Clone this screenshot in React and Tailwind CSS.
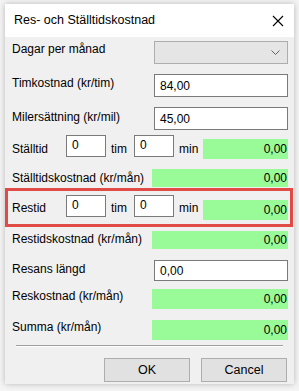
import React from "react";

const font = { fontFamily: '"Liberation Sans", "Noto Sans", sans-serif' };

const Green = ({ className = "" }) => (
  <div className={`bg-[#98fb98] text-right pr-[1px] leading-[18px] ${className}`}>0,00</div>
);

const Box = ({ value, className = "" }) => (
  <div className={`bg-white border border-[#7a7a7a] px-[5px] leading-[18px] ${className}`}>{value}</div>
);

export default function App() {
  return (
    <div className="w-[299px] h-[391px] bg-[#f4f4f4] pt-[4px] pl-[5px] whitespace-nowrap" style={font}>
      <div className="w-[289px] h-[380px] bg-[#f0f0f0] shadow-[0_0_6px_rgba(0,0,0,0.25)] text-[12px] text-black flex flex-col">
        {/* title bar */}
        <div className="h-[33px] bg-white flex items-center justify-between pl-[9px] pr-[10px] shrink-0">
          <span className="text-[12.5px]">Res- och Ställtidskostnad</span>
          <svg width="12" height="12" viewBox="0 0 12 12">
            <path d="M1 1 L11 11 M11 1 L1 11" stroke="#000" strokeWidth="1.1" />
          </svg>
        </div>

        <div className="pl-[7px] pr-[6px] flex flex-col">
          {/* Dagar per månad */}
          <div className="h-[33px] flex justify-between items-start">
            <span className="mt-[3px]">Dagar per månad</span>
            <div className="mt-[4px] w-[134px] h-[23px] bg-[#e5e5e5] border border-[#adadad] flex items-center justify-end pr-[7px]">
              <svg width="9" height="6" viewBox="0 0 9 6">
                <path d="M0.5 0.5 L4.5 4.5 L8.5 0.5" stroke="#606060" fill="none" />
              </svg>
            </div>
          </div>

          {/* Timkostnad */}
          <div className="h-[33px] flex justify-between items-start">
            <span className="mt-[4px]">Timkostnad (kr/tim)</span>
            <Box value="84,00" className="mt-[4px] w-[134px] h-[23px] leading-[22px]" />
          </div>

          {/* Milersättning */}
          <div className="h-[30px] flex justify-between items-start">
            <span className="mt-[5px]">Milersättning (kr/mil)</span>
            <Box value="45,00" className="mt-[4px] w-[134px] h-[23px] leading-[22px]" />
          </div>

          {/* Ställtid */}
          <div className="h-[32px] flex items-start">
            <span className="mt-[7px] w-[54px]">Ställtid</span>
            <Box value="0" className="mt-[2px] w-[40px] h-[22px] leading-[16px]" />
            <span className="mt-[7px] w-[28px] pl-[5px]">tim</span>
            <Box value="0" className="mt-[2px] w-[40px] h-[22px] leading-[16px]" />
            <span className="mt-[7px] pl-[5px] w-[29px]">min</span>
            <Green className="mt-[6px] w-[85px] h-[20px] leading-[20px]" />
          </div>

          {/* Ställtidskostnad */}
          <div className="h-[23px] flex justify-between items-start">
            <span className="mt-[4px]">Ställtidskostnad (kr/mån)</span>
            <Green className="mt-[4px] w-[136px] h-[18px]" />
          </div>
        </div>

        {/* Restid highlighted */}
        <div className="h-[39px] border-[3px] border-[#e14b45] mr-[1px] pl-[4px] pr-[2px] flex items-start">
          <span className="mt-[8px] w-[54px]">Restid</span>
          <Box value="0" className="mt-[4px] w-[40px] h-[22px] leading-[16px]" />
          <span className="mt-[8px] w-[28px] pl-[5px]">tim</span>
          <Box value="0" className="mt-[4px] w-[40px] h-[22px] leading-[16px]" />
          <span className="mt-[8px] pl-[5px] w-[29px]">min</span>
          <Green className="mt-[9px] w-[85px] h-[20px] leading-[20px]" />
        </div>

        <div className="pl-[7px] pr-[6px] flex flex-col">
          {/* Restidskostnad */}
          <div className="h-[26px] flex justify-between items-start">
            <span className="mt-[3px]">Restidskostnad (kr/mån)</span>
            <Green className="mt-[4px] w-[136px] h-[18px]" />
          </div>

          {/* Resans längd */}
          <div className="h-[31px] flex justify-between items-start">
            <span className="mt-[7px]">Resans längd</span>
            <Box value="0,00" className="mt-[7px] w-[134px] h-[21px] leading-[20px]" />
          </div>

          {/* Reskostnad */}
          <div className="h-[31px] flex justify-between items-start">
            <span className="mt-[3px]">Reskostnad (kr/mån)</span>
            <Green className="mt-[5px] w-[136px] h-[20px] leading-[20px]" />
          </div>

          {/* Summa */}
          <div className="h-[28px] flex justify-between items-start">
            <span className="mt-[3px]">Summa (kr/mån)</span>
            <Green className="mt-[5px] w-[136px] h-[20px] leading-[20px]" />
          </div>
        </div>

        {/* separator */}
        <div className="mt-[2px] mx-[11px] border-t border-[#a0a0a0] border-b border-b-white" />

        {/* buttons */}
        <div className="mt-[11px] flex justify-end gap-[11px] pr-[7px]">
          <button className="w-[86px] h-[24px] bg-[#e1e1e1] border border-[#adadad] text-[12.5px]">OK</button>
          <button className="w-[86px] h-[24px] bg-[#e1e1e1] border border-[#adadad] text-[12.5px]">Cancel</button>
        </div>
      </div>
    </div>
  );
}
